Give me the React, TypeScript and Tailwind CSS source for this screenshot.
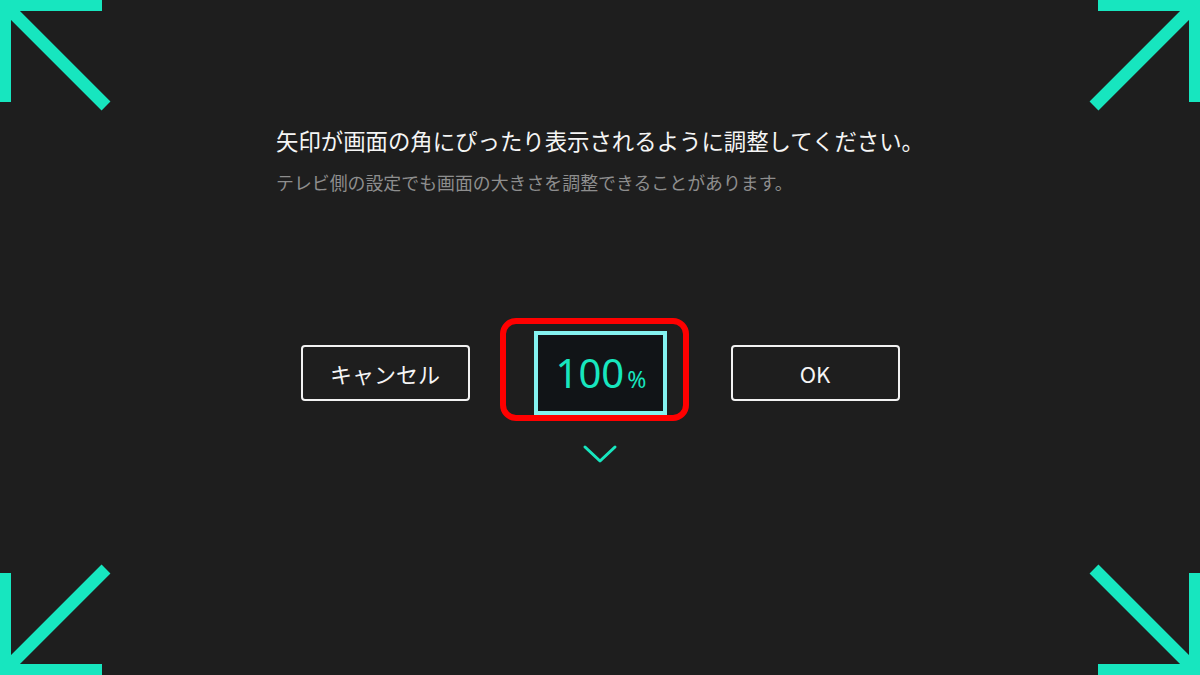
import React from "react";

const TEAL = "#17e6bf";

const CornerArrow: React.FC<{ className: string }> = ({ className }) => (
  <svg
    className={"absolute " + className}
    width="112"
    height="112"
    viewBox="0 0 112 112"
  >
    <rect x="0" y="0" width="102" height="11" fill={TEAL} />
    <rect x="0" y="0" width="11" height="102" fill={TEAL} />
    <line x1="6" y1="6" x2="106" y2="106" stroke={TEAL} strokeWidth="12.5" />
  </svg>
);

const OutlineButton: React.FC<{ label: string }> = ({ label }) => (
  <div className="flex h-[56px] w-[169px] items-center justify-center rounded-[4px] border-2 border-[#f2f2f2] text-[22px] text-[#f5f5f5]">
    {label}
  </div>
);

export default function App() {
  return (
    <div
      className="relative h-[675px] w-full overflow-hidden bg-[#1e1e1e]"
      style={{ fontFamily: '"Noto Sans CJK JP", "Noto Sans", sans-serif' }}
    >
      <CornerArrow className="left-0 top-0" />
      <CornerArrow className="right-0 top-0 rotate-90" />
      <CornerArrow className="right-0 bottom-0 rotate-180" />
      <CornerArrow className="left-0 bottom-0 -rotate-90" />

      <div className="flex flex-col items-center pt-[123px]">
        <div className="flex flex-col items-start">
          <p className="text-[22.4px] leading-[34px] text-[#f5f5f5]">
            矢印が画面の角にぴったり表示されるように調整してください。
          </p>
          <p className="mt-[13px] text-[17.9px] leading-[24px] text-[#8e8e8e]">
            テレビ側の設定でも画面の大きさを調整できることがあります。
          </p>
        </div>

        <div className="mt-[137px] flex items-center gap-[64px]">
          <OutlineButton label="キャンセル" />
          <div className="relative">
            <div className="flex h-[84px] w-[133px] items-center justify-center border-4 border-[#84f2f0] bg-[#111417] pl-[2px]">
              <span
                className="text-[40px] leading-none"
                style={{ color: TEAL, fontFamily: '"Noto Sans", sans-serif' }}
              >
                100
              </span>
              <span
                className="ml-[3px] mt-[12px] text-[23px] leading-none"
                style={{ color: TEAL, fontFamily: '"Noto Sans", sans-serif' }}
              >
                %
              </span>
            </div>
            <div className="pointer-events-none absolute -left-[34px] -right-[22px] -top-[13px] -bottom-[6px] rounded-[16px] border-[6px] border-[#ff0000]" />
          </div>
          <OutlineButton label="OK" />
        </div>

        <svg className="mt-[29px]" width="36" height="20" viewBox="0 0 36 20">
          <polyline
            points="3,3 18,17 33,3"
            fill="none"
            stroke={TEAL}
            strokeWidth="3"
            strokeLinecap="round"
            strokeLinejoin="round"
          />
        </svg>
      </div>
    </div>
  );
}
